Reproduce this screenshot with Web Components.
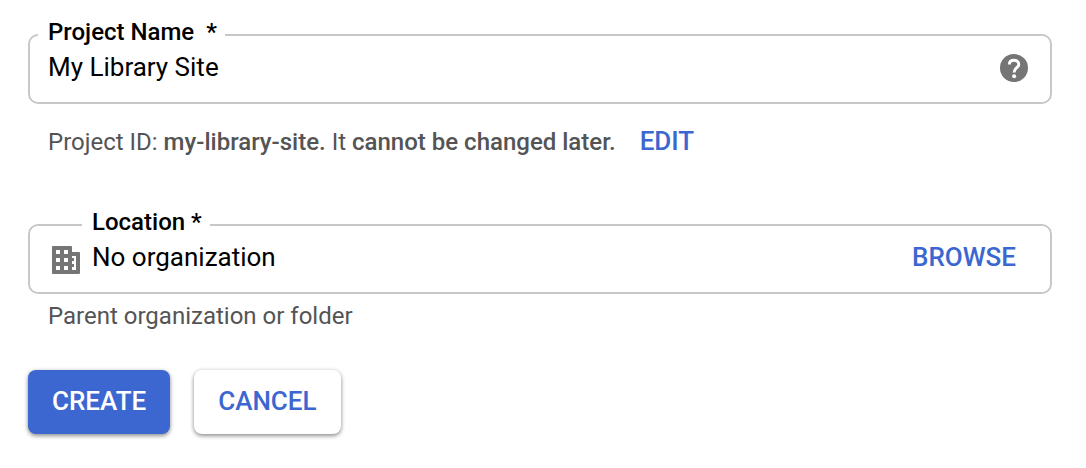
<!DOCTYPE html>
<html lang="en">
<head>
<meta charset="utf-8">
<title>New Project</title>
<style>
  body {
    margin: 0;
    background: #fff;
    color: #000;
    font-family: Roboto, "Liberation Sans", sans-serif;
  }
</style>
</head>
<body>
<project-form></project-form>

<script>
const define = (name, html, setup) => {
  const template = document.createElement('template');
  template.innerHTML = html;
  customElements.define(name, class extends HTMLElement {
    constructor() {
      super();
      this.attachShadow({ mode: 'open' }).append(template.content.cloneNode(true));
    }
    connectedCallback() {
      if (setup) setup(this, this.shadowRoot);
    }
  });
};

define('help-icon', `
  <style>
    :host { display: block; width: 28px; height: 28px; color: #757575; }
    svg { display: block; width: 100%; height: 100%; }
  </style>
  <svg viewBox="0 0 28 28" aria-hidden="true">
    <circle cx="14" cy="14" r="14" fill="currentColor"/>
    <path d="M9.3 10.6C9.3 7.8 11.3 6.2 14 6.2S18.8 7.9 18.8 10.4C18.8 13.6 14.1 14 14.1 18.4" fill="none" stroke="#fff" stroke-width="2.9"/>
    <circle cx="14.1" cy="22.3" r="2" fill="#fff"/>
  </svg>`);

define('organization-icon', `
  <style>
    :host { display: block; width: 28px; height: 28px; color: #757575; }
    svg { display: block; width: 100%; height: 100%; }
  </style>
  <svg viewBox="0 0 28 28" fill="currentColor" fill-rule="evenodd" aria-hidden="true">
    <path d="M1 0H19Q20 0 20 1V6H27Q28 6 28 7V27Q28 28 27 28H1Q0 28 0 27V1Q0 0 1 0Z
      M4 4V8H8V4ZM12 4V8H16V4ZM4 12V16H8V12ZM12 12V16H16V12ZM4 20V24H8V20ZM12 20V24H16V20Z
      M20 10V12H22V15H20V18H22V21H20V24H24V10Z"/>
  </svg>`);

define('outlined-field', `
  <style>
    :host { display: block; }
    .box {
      position: relative;
      display: flex;
      align-items: center;
      box-sizing: border-box;
      height: 70px;
      padding: 0 22px 0 18px;
      border: 2px solid #c8c8c8;
      border-radius: 10px;
    }
    ::slotted([slot="icon"]) { flex: none; margin: 2px 12px 0 4px; }
    .value { position: relative; flex: 1; min-width: 0; }
    label {
      position: absolute;
      left: -10px;
      bottom: 100%;
      padding: 0 8px 0 10px;
      background: #fff;
      font-size: 24px;
      line-height: 28px;
      font-weight: 500;
      white-space: pre;
    }
    input {
      display: block;
      width: 100%;
      height: 42px;
      margin: 0 0 4px;
      padding: 0;
      border: 0;
      outline: 0;
      background: none;
      color: inherit;
      font: 26px/42px Roboto, "Liberation Sans", sans-serif;
    }
  </style>
  <div class="box">
    <slot name="icon"></slot>
    <div class="value">
      <label for="control"></label>
      <input id="control" type="text" required>
    </div>
    <slot name="action"></slot>
  </div>`, (host, root) => {
    root.querySelector('label').textContent = host.getAttribute('label');
    root.querySelector('input').value = host.getAttribute('value');
  });

define('action-button', `
  <style>
    :host { display: inline-block; }
    button {
      display: block;
      margin: 0;
      padding: 0 0 2px;
      border: 0;
      background: none;
      color: #3c67d0;
      font: 500 26px/30px Roboto, "Liberation Sans", sans-serif;
      cursor: pointer;
    }
    :host([variant]) button {
      height: 64px;
      padding: 0 24px 2px;
      border-radius: 8px;
      background: #fff;
      box-shadow: 0 2px 4px rgba(0,0,0,.4), 0 0 4px rgba(0,0,0,.1);
    }
    :host([variant="primary"]) button { background: #3c67d0; color: #fff; }
  </style>
  <button type="button"><slot></slot></button>`);

define('project-form', `
  <style>
    :host { display: block; padding: 34px 34px 34px 28px; }
    .hint { margin: 0; padding: 0 20px; color: #545454; font-size: 24px; line-height: 28px; }
    .id { display: flex; align-items: center; gap: 24px; margin: 22px 0 66px; line-height: 32px; }
    b { font-weight: 500; }
    .location { margin-top: 8px; }
    .actions { display: flex; gap: 24px; margin-top: 40px; }
    help-icon { flex: none; margin-bottom: 2px; }
    .browse { margin: 0 12px 2px 0; }
  </style>
  <outlined-field label="Project Name  *" value="My Library Site">
    <help-icon slot="action"></help-icon>
  </outlined-field>
  <div class="hint id">
    <span>Project ID: <b>my-library-site.</b> It <b>cannot be changed later.</b></span>
    <action-button>EDIT</action-button>
  </div>
  <outlined-field label="Location *" value="No organization">
    <organization-icon slot="icon"></organization-icon>
    <action-button slot="action" class="browse">BROWSE</action-button>
  </outlined-field>
  <p class="hint location">Parent organization or folder</p>
  <div class="actions">
    <action-button variant="primary">CREATE</action-button>
    <action-button variant="plain">CANCEL</action-button>
  </div>`);
</script>
</body>
</html>
